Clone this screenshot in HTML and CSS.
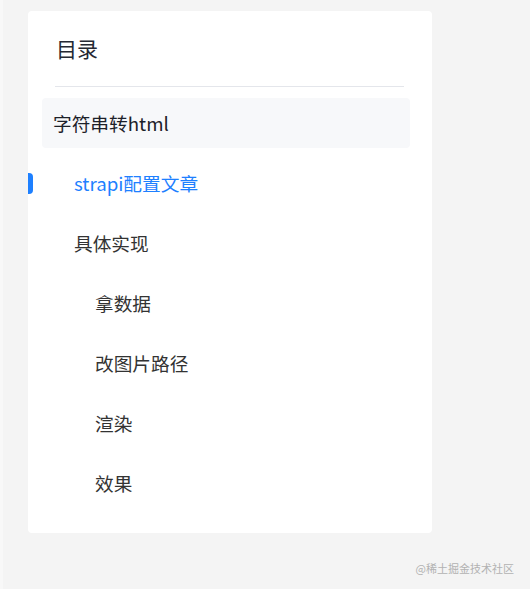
FILE: index.html
```html
<!DOCTYPE html>
<html lang="zh-CN">
<head>
  <meta charset="UTF-8">
  <title>目录</title>
  <link rel="stylesheet" href="styles.css">
</head>
<body>

  <div class="page">
    <div class="catalog">
      <div class="catalog-title">目录</div>
      <ul class="catalog-list">
        <li class="item level-0 hover">字符串转html</li>
        <li class="item level-1 active">strapi配置文章</li>
        <li class="item level-1">具体实现</li>
        <li class="item level-2">拿数据</li>
        <li class="item level-2">改图片路径</li>
        <li class="item level-2">渲染</li>
        <li class="item level-2">效果</li>
      </ul>
    </div>
  </div>

  <div class="watermark">@稀土掘金技术社区</div>

</body>
</html>
```

FILE: styles.css
```css
body {
  margin: 0;
  background-color: #f4f4f4;
  font-family: "Noto Sans CJK SC", "Noto Sans", sans-serif;
  border-left: 3px solid #f8f8f8;
  min-height: 589px;
  box-sizing: border-box;
}
.page {
  padding: 11px 0 0 25px;
}
.catalog {
  width: 404px;
  background-color: #fff;
  border-radius: 4px;
  padding-bottom: 25px;
}
.catalog-title {
  margin: 0 28px 0 27px;
  padding: 22px 0 23px 1px;
  line-height: 30px;
  font-size: 21px;
  color: #252933;
  border-bottom: 1px solid #e4e6eb;
}
.catalog-list {
  list-style: none;
  margin: 11px 22px 0 14px;
  padding: 0;
}
.item {
  position: relative;
  height: 50px;
  line-height: 50px;
  margin-bottom: 10px;
  font-size: 18.7px;
  color: #333;
  border-radius: 4px;
  cursor: pointer;
}
.item:last-child {
  margin-bottom: 0;
}
.level-0 {
  padding-left: 11px;
}
.level-1 {
  padding-left: 32px;
}
.level-2 {
  padding-left: 53px;
}
.hover {
  background-color: #f7f8fa;
  color: #1d2129;
}
.active {
  color: #1e80ff;
}
.active::before {
  content: "";
  position: absolute;
  left: -14px;
  top: 15px;
  width: 5px;
  height: 21px;
  background-color: #1e80ff;
  border-radius: 0 4px 4px 0;
}
.watermark {
  margin-top: 27px;
  padding-right: 16px;
  text-align: right;
  font-size: 11px;
  line-height: 16px;
  color: #b2b2b2;
}
```
